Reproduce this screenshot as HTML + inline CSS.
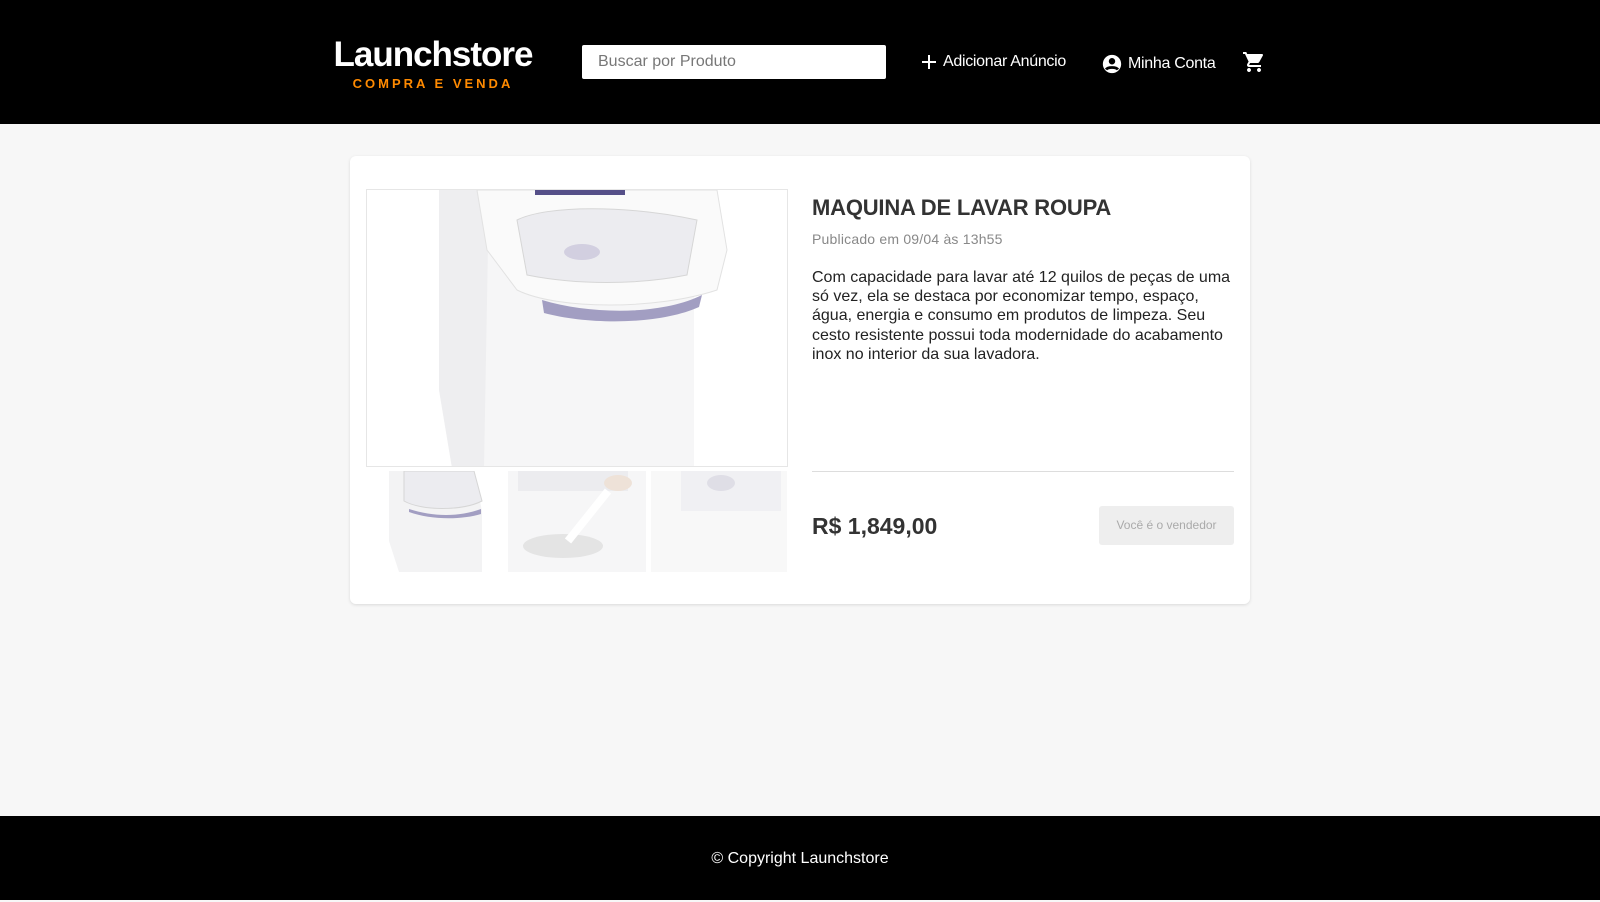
<!DOCTYPE html>
<html><head><meta charset="utf-8"><style>
*{margin:0;padding:0;box-sizing:border-box}
body{width:1600px;height:900px;background:#f7f7f7;font-family:"Liberation Sans",Roboto,sans-serif;position:relative;overflow:hidden}
header{position:absolute;left:0;top:0;width:1600px;height:124px;background:#000;color:#fff}
.logo{position:absolute;left:320px;top:34px;width:226px;text-align:center}
.logo h1{font-size:35px;font-weight:bold;letter-spacing:-1px;line-height:42px}
.logo p{color:#ff8a00;font-size:13px;font-weight:bold;letter-spacing:3px;margin-top:0px}
.search{position:absolute;left:582px;top:45px;width:304px;height:34px;background:#fff;border-radius:2px;color:#777;font-size:16px;padding:8px 16px}
.nav{position:absolute;top:53px;font-size:16px;color:#fff;display:flex;align-items:center;gap:5px;letter-spacing:-0.3px}
footer{position:absolute;left:0;top:816px;width:1600px;height:84px;background:#000;color:#fff;text-align:center;font-size:16px;line-height:86px}
.card{position:absolute;left:350px;top:156px;width:900px;height:448px;background:#fff;border-radius:6px;box-shadow:0 1px 3px rgba(0,0,0,.12)}
.main{position:absolute;left:366px;top:189px;width:422px;height:278px;border:1px solid #e6e6e6;background:#fff;overflow:hidden}
.thumb{position:absolute;top:471px;height:101px;overflow:hidden;background:#fff}
.title{position:absolute;left:812px;top:195px;font-size:22px;font-weight:bold;color:#333;letter-spacing:-0.2px}
.date{position:absolute;left:812px;top:231px;font-size:14px;color:#888;letter-spacing:.2px}
.desc{position:absolute;left:812px;top:268px;width:425px;font-size:16px;line-height:19.2px;color:#222}
.hr{position:absolute;left:812px;top:471px;width:422px;height:1px;background:#ddd}
.price{position:absolute;left:812px;top:513px;font-size:23px;font-weight:bold;color:#333}
.btn{position:absolute;left:1099px;top:506px;width:135px;height:39px;background:#eee;border-radius:3px;color:#aaa;font-size:12px;text-align:center;line-height:39px}
</style></head><body>
<header>
<div class="logo"><h1>Launchstore</h1><p>COMPRA E VENDA</p></div>
<div class="search">Buscar por Produto</div>
<div class="nav" style="left:920px"><svg width="18" height="18" viewBox="0 0 18 18"><path d="M9 2v14M2 9h14" stroke="#fff" stroke-width="2"/></svg>Adicionar Anúncio</div>
<div class="nav" style="left:1101px"><svg width="22" height="22" viewBox="0 0 24 24"><circle cx="12" cy="12" r="10" fill="#fff"/><circle cx="12" cy="9" r="3.5" fill="#000"/><path d="M5.5 18c2-3 11-3 13 0" stroke="#000" stroke-width="3" fill="none"/></svg>Minha Conta</div>
<div class="nav" style="left:1242px;top:50px"><svg width="24" height="24" viewBox="0 0 24 24"><path fill="#fff" d="M7 18c-1.1 0-2 .9-2 2s.9 2 2 2 2-.9 2-2-.9-2-2-2zM1 2v2h2l3.6 7.6-1.35 2.4C4.520 15.370 5.480 17 7 17h12v-2H7.420c-.14 0-.25-.11-.25-.25l.03-.12.9-1.630h7.450c.75 0 1.410-.41 1.750-1.030l3.580-6.490A1 1 0 0 0 20 4H5.210l-.94-2H1zm16 16c-1.1 0-2 .9-2 2s.9 2 2 2 2-.9 2-2-.9-2-2-2z"/></svg></div>
</header>
<div class="card"></div>
<div class="main"><svg width="422" height="278" viewBox="0 0 422 278">
<path d="M72 0h220l35 40v238H85L72 200z" fill="#f6f6f7"/>
<path d="M72 0h50l-5 278H85L72 200z" fill="#eeeef0"/>
<path d="M110 0h240l10 60-10 40c-60 20-160 20-200 0l-30-40z" fill="#fafafa" stroke="#e2e2e2"/>
<path d="M150 30c30-15 110-15 180 0l-10 55c-50 10-110 10-160 0z" fill="#ececf0" stroke="#d6d6d6"/>
<ellipse cx="215" cy="62" rx="18" ry="8" fill="#d2cfe0"/>
<path d="M175 110c50 15 120 15 160-5l-3 12c-40 18-110 18-155 6z" fill="#a29ec2"/>
<rect x="168" y="0" width="90" height="5" fill="#554f88"/>
</svg></div>
<div class="thumb" style="left:389px;width:98px"><svg width="98" height="101"><path d="M0 0h85l8 40v61H10L0 70z" fill="#f3f3f4"/><path d="M15 0h70l8 30c-20 10-60 10-78 0z" fill="#ececf0" stroke="#d6d6d6"/><path d="M20 38c25 8 50 8 72 0v5c-20 6-50 6-72-2z" fill="#a29ec2"/></svg></div>
<div class="thumb" style="left:508px;width:138px"><svg width="138" height="101"><rect width="138" height="101" fill="#f6f6f7"/><rect x="10" y="0" width="110" height="20" fill="#ececef"/><ellipse cx="55" cy="75" rx="40" ry="12" fill="#e4e4e4"/><path d="M60 70l40-50" stroke="#fff" stroke-width="8"/><ellipse cx="110" cy="12" rx="14" ry="8" fill="#eee2d8"/></svg></div>
<div class="thumb" style="left:651px;width:136px"><svg width="136" height="101"><rect width="136" height="101" fill="#f8f8f8"/><path d="M30 0h100v40H30z" fill="#f0f0f3"/><ellipse cx="70" cy="12" rx="14" ry="8" fill="#dfdee6"/></svg></div>
<div class="title">MAQUINA DE LAVAR ROUPA</div>
<div class="date">Publicado em 09/04 às 13h55</div>
<div class="desc">Com capacidade para lavar até 12 quilos de peças de uma só vez, ela se destaca por economizar tempo, espaço, água, energia e consumo em produtos de limpeza. Seu cesto resistente possui toda modernidade do acabamento inox no interior da sua lavadora.</div>
<div class="hr"></div>
<div class="price">R$ 1,849,00</div>
<div class="btn">Você é o vendedor</div>
<footer>© Copyright Launchstore</footer>
</body></html>
